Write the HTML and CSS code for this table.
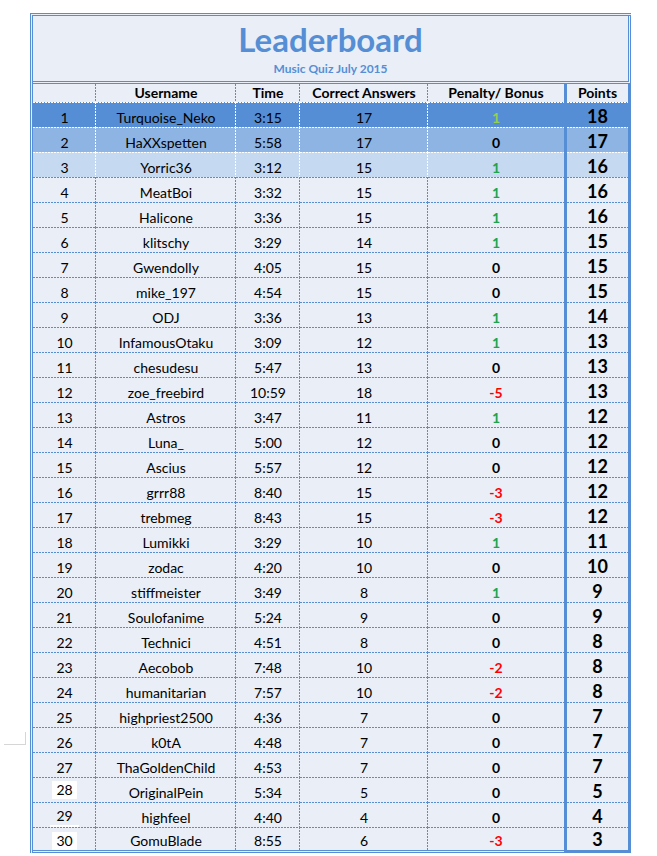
FILE: index.html
```html
<!DOCTYPE html>
<html lang="en">
<head>
<meta charset="utf-8">
<title>Leaderboard</title>
<link rel="stylesheet" href="styles.css">
</head>
<body>
<div class="mark"></div>
<div class="board">
  <div class="title">
    <h1>Leaderboard</h1>
    <p>Music Quiz July 2015</p>
  </div>
  <div class="row head">
    <div class="cell"></div>
    <div class="cell">Username</div>
    <div class="cell">Time</div>
    <div class="cell">Correct Answers</div>
    <div class="cell pen">Penalty/ Bonus</div>
    <div class="cell pts">Points</div>
  </div>
  <div class="row r1"><div class="cell">1</div><div class="cell">Turquoise_Neko</div><div class="cell">3:15</div><div class="cell">17</div><div class="cell pen g">1</div><div class="cell pts">18</div></div>
  <div class="row r2"><div class="cell">2</div><div class="cell">HaXXspetten</div><div class="cell">5:58</div><div class="cell">17</div><div class="cell pen">0</div><div class="cell pts">17</div></div>
  <div class="row r3"><div class="cell">3</div><div class="cell">Yorric36</div><div class="cell">3:12</div><div class="cell">15</div><div class="cell pen g">1</div><div class="cell pts">16</div></div>
  <div class="row"><div class="cell">4</div><div class="cell">MeatBoi</div><div class="cell">3:32</div><div class="cell">15</div><div class="cell pen g">1</div><div class="cell pts">16</div></div>
  <div class="row"><div class="cell">5</div><div class="cell">Halicone</div><div class="cell">3:36</div><div class="cell">15</div><div class="cell pen g">1</div><div class="cell pts">16</div></div>
  <div class="row"><div class="cell">6</div><div class="cell">klitschy</div><div class="cell">3:29</div><div class="cell">14</div><div class="cell pen g">1</div><div class="cell pts">15</div></div>
  <div class="row"><div class="cell">7</div><div class="cell">Gwendolly</div><div class="cell">4:05</div><div class="cell">15</div><div class="cell pen">0</div><div class="cell pts">15</div></div>
  <div class="row"><div class="cell">8</div><div class="cell">mike_197</div><div class="cell">4:54</div><div class="cell">15</div><div class="cell pen">0</div><div class="cell pts">15</div></div>
  <div class="row"><div class="cell">9</div><div class="cell">ODJ</div><div class="cell">3:36</div><div class="cell">13</div><div class="cell pen g">1</div><div class="cell pts">14</div></div>
  <div class="row"><div class="cell">10</div><div class="cell">InfamousOtaku</div><div class="cell">3:09</div><div class="cell">12</div><div class="cell pen g">1</div><div class="cell pts">13</div></div>
  <div class="row"><div class="cell">11</div><div class="cell">chesudesu</div><div class="cell">5:47</div><div class="cell">13</div><div class="cell pen">0</div><div class="cell pts">13</div></div>
  <div class="row"><div class="cell">12</div><div class="cell">zoe_freebird</div><div class="cell">10:59</div><div class="cell">18</div><div class="cell pen neg">-5</div><div class="cell pts">13</div></div>
  <div class="row"><div class="cell">13</div><div class="cell">Astros</div><div class="cell">3:47</div><div class="cell">11</div><div class="cell pen g">1</div><div class="cell pts">12</div></div>
  <div class="row"><div class="cell">14</div><div class="cell">Luna_</div><div class="cell">5:00</div><div class="cell">12</div><div class="cell pen">0</div><div class="cell pts">12</div></div>
  <div class="row"><div class="cell">15</div><div class="cell">Ascius</div><div class="cell">5:57</div><div class="cell">12</div><div class="cell pen">0</div><div class="cell pts">12</div></div>
  <div class="row"><div class="cell">16</div><div class="cell">grrr88</div><div class="cell">8:40</div><div class="cell">15</div><div class="cell pen neg">-3</div><div class="cell pts">12</div></div>
  <div class="row"><div class="cell">17</div><div class="cell">trebmeg</div><div class="cell">8:43</div><div class="cell">15</div><div class="cell pen neg">-3</div><div class="cell pts">12</div></div>
  <div class="row"><div class="cell">18</div><div class="cell">Lumikki</div><div class="cell">3:29</div><div class="cell">10</div><div class="cell pen g">1</div><div class="cell pts">11</div></div>
  <div class="row"><div class="cell">19</div><div class="cell">zodac</div><div class="cell">4:20</div><div class="cell">10</div><div class="cell pen">0</div><div class="cell pts">10</div></div>
  <div class="row"><div class="cell">20</div><div class="cell">stiffmeister</div><div class="cell">3:49</div><div class="cell">8</div><div class="cell pen g">1</div><div class="cell pts">9</div></div>
  <div class="row"><div class="cell">21</div><div class="cell">Soulofanime</div><div class="cell">5:24</div><div class="cell">9</div><div class="cell pen">0</div><div class="cell pts">9</div></div>
  <div class="row"><div class="cell">22</div><div class="cell">Technici</div><div class="cell">4:51</div><div class="cell">8</div><div class="cell pen">0</div><div class="cell pts">8</div></div>
  <div class="row"><div class="cell">23</div><div class="cell">Aecobob</div><div class="cell">7:48</div><div class="cell">10</div><div class="cell pen neg">-2</div><div class="cell pts">8</div></div>
  <div class="row"><div class="cell">24</div><div class="cell">humanitarian</div><div class="cell">7:57</div><div class="cell">10</div><div class="cell pen neg">-2</div><div class="cell pts">8</div></div>
  <div class="row"><div class="cell">25</div><div class="cell">highpriest2500</div><div class="cell">4:36</div><div class="cell">7</div><div class="cell pen">0</div><div class="cell pts">7</div></div>
  <div class="row"><div class="cell">26</div><div class="cell">k0tA</div><div class="cell">4:48</div><div class="cell">7</div><div class="cell pen">0</div><div class="cell pts">7</div></div>
  <div class="row"><div class="cell">27</div><div class="cell">ThaGoldenChild</div><div class="cell">4:53</div><div class="cell">7</div><div class="cell pen">0</div><div class="cell pts">7</div></div>
  <div class="row"><div class="cell"><span class="patch p28">28</span></div><div class="cell">OriginalPein</div><div class="cell">5:34</div><div class="cell">5</div><div class="cell pen">0</div><div class="cell pts">5</div></div>
  <div class="row"><div class="cell"><span class="patch p29">29</span></div><div class="cell">highfeel</div><div class="cell">4:40</div><div class="cell">4</div><div class="cell pen">0</div><div class="cell pts">4</div></div>
  <div class="row last"><div class="cell"><span class="patch p30">30</span></div><div class="cell">GomuBlade</div><div class="cell">8:55</div><div class="cell">6</div><div class="cell pen neg">-3</div><div class="cell pts">3</div></div>
</div>
</body>
</html>
```
FILE: styles.css
```css
:root {
  --blue: #558ed5;
}

body {
  margin: 0;
  background: #ffffff;
  font-family: Lato, "Open Sans", sans-serif;
  color: #000000;
}

.mark {
  position: absolute;
  left: 4px;
  top: 732px;
  width: 21px;
  height: 12px;
  border-right: 1px solid #d6d6d6;
  border-bottom: 1px solid #d6d6d6;
}

.board {
  margin: 13px 0 0 30px;
  width: 601px;
  box-sizing: border-box;
  border-left: 3px double var(--blue);
  border-top: 3px double var(--blue);
  background: #e9eef7;
}

.title {
  height: 68px;
  box-sizing: border-box;
  border-right: 3px double var(--blue);
  border-bottom: 3px double var(--blue);
  display: flex;
  flex-direction: column;
  align-items: center;
  padding-top: 7px;
}

.title h1 {
  margin: 0;
  font-size: 33px;
  line-height: 33px;
  font-weight: 700;
  color: var(--blue);
}

.title p {
  margin: 7px 0 0;
  font-size: 12px;
  line-height: 12px;
  font-weight: 700;
  color: var(--blue);
}

.row {
  --line: var(--blue);
  --bg: #e9eef7;
  display: grid;
  grid-template-columns: 63px 140px 64px 128px 136px 67px;
}

.r1 { --line: #ffffff; --bg: #558ed5; }
.r2 { --line: #ffffff; --bg: #8db4e2; }
.r3 { --line: #ffffff; --bg: #c5d9f1; }

.cell {
  height: 25px;
  box-sizing: border-box;
  display: flex;
  align-items: flex-end;
  justify-content: center;
  font-size: 14px;
  line-height: 18px;
  white-space: nowrap;
  background-color: var(--bg);
  background-image:
    repeating-linear-gradient(to right, var(--line) 0 2px, transparent 2px 3px),
    repeating-linear-gradient(to bottom, var(--line) 0 2px, transparent 2px 3px);
  background-size: 100% 1px, 1px 100%;
  background-position: left top, right top;
  background-repeat: no-repeat;
}

.head .cell {
  height: 18px;
  font-weight: 700;
  background-size: 0 0, 1px 100%;
}

.pen {
  font-weight: 700;
}

.cell.pen,
.cell.pts {
  background-size: 100% 1px, 0 0;
}

.head .cell.pen,
.head .cell.pts {
  background-size: 0 0, 0 0;
}

.pts {
  border-left: 3px solid var(--blue);
  border-right: 3px solid var(--blue);
  font-size: 18px;
  font-weight: 700;
  line-height: 22px;
}

.head .pts {
  font-size: 14px;
  line-height: 18px;
}

.g { color: #1ea34e; }
.r1 .g { color: #92d050; }
.neg { color: #ff0000; }

.last .cell {
  height: 26px;
  border-bottom: 3px double var(--blue);
}

.last .cell.pts {
  border-bottom-style: solid;
}

.patch {
  background: #ffffff;
  padding: 0 4px;
}

.p28 {
  margin-bottom: 3px;
}

.p29 {
  background: transparent;
  border-bottom: 2px solid #ffffff;
  padding: 0 6px;
}
```
